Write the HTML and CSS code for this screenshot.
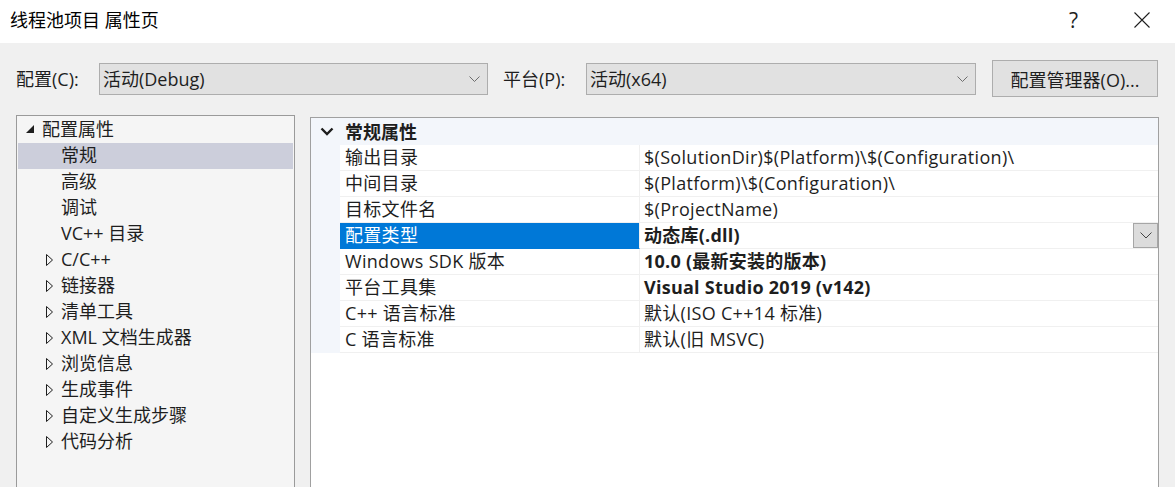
FILE: index.html
```html
<!DOCTYPE html>
<html lang="zh-CN">
<head>
<meta charset="utf-8">
<title>线程池项目 属性页</title>
<link rel="stylesheet" href="styles.css">
</head>
<body>
<div class="dialog">
  <div class="titlebar">
    <div class="title">线程池项目 属性页</div>
    <div class="title-btns">
      <span class="help">?</span>
      <svg class="close" width="16" height="16" viewBox="0 0 16 16"><path d="M0.5 0.5 L15.5 15.5 M15.5 0.5 L0.5 15.5" stroke="#1e1e1e" stroke-width="1.1" fill="none"/></svg>
    </div>
  </div>

  <div class="configbar">
    <span class="lbl">配置(C):</span>
    <div class="combo combo-cfg">
      <span>活动(Debug)</span>
      <svg class="chev" width="11" height="6" viewBox="0 0 11 6"><path d="M0.5 0.5 L5.5 5.5 L10.5 0.5" stroke="#6d6d6d" stroke-width="1" fill="none"/></svg>
    </div>
    <span class="lbl lbl-plat">平台(P):</span>
    <div class="combo combo-plat">
      <span>活动(x64)</span>
      <svg class="chev" width="11" height="6" viewBox="0 0 11 6"><path d="M0.5 0.5 L5.5 5.5 L10.5 0.5" stroke="#6d6d6d" stroke-width="1" fill="none"/></svg>
    </div>
    <button class="btn">配置管理器(O)...</button>
  </div>

  <div class="main">
    <div class="tree">
      <div class="trow lvl0">
        <span class="tw"><svg width="10" height="10" viewBox="0 0 10 10"><polygon points="9,1 9,9 1,9" fill="#1e1e1e"/></svg></span>
        <span>配置属性</span>
      </div>
      <div class="trow lvl1 sel"><span class="tw"></span><span>常规</span></div>
      <div class="trow lvl1"><span class="tw"></span><span>高级</span></div>
      <div class="trow lvl1"><span class="tw"></span><span>调试</span></div>
      <div class="trow lvl1"><span class="tw"></span><span>VC++ 目录</span></div>
      <div class="trow lvl1"><span class="tw"><svg width="8" height="12" viewBox="0 0 8 12"><polygon points="0.5,0.5 6.5,6 0.5,11.5" fill="none" stroke="#1e1e1e" stroke-width="1"/></svg></span><span>C/C++</span></div>
      <div class="trow lvl1"><span class="tw"><svg width="8" height="12" viewBox="0 0 8 12"><polygon points="0.5,0.5 6.5,6 0.5,11.5" fill="none" stroke="#1e1e1e" stroke-width="1"/></svg></span><span>链接器</span></div>
      <div class="trow lvl1"><span class="tw"><svg width="8" height="12" viewBox="0 0 8 12"><polygon points="0.5,0.5 6.5,6 0.5,11.5" fill="none" stroke="#1e1e1e" stroke-width="1"/></svg></span><span>清单工具</span></div>
      <div class="trow lvl1"><span class="tw"><svg width="8" height="12" viewBox="0 0 8 12"><polygon points="0.5,0.5 6.5,6 0.5,11.5" fill="none" stroke="#1e1e1e" stroke-width="1"/></svg></span><span>XML 文档生成器</span></div>
      <div class="trow lvl1"><span class="tw"><svg width="8" height="12" viewBox="0 0 8 12"><polygon points="0.5,0.5 6.5,6 0.5,11.5" fill="none" stroke="#1e1e1e" stroke-width="1"/></svg></span><span>浏览信息</span></div>
      <div class="trow lvl1"><span class="tw"><svg width="8" height="12" viewBox="0 0 8 12"><polygon points="0.5,0.5 6.5,6 0.5,11.5" fill="none" stroke="#1e1e1e" stroke-width="1"/></svg></span><span>生成事件</span></div>
      <div class="trow lvl1"><span class="tw"><svg width="8" height="12" viewBox="0 0 8 12"><polygon points="0.5,0.5 6.5,6 0.5,11.5" fill="none" stroke="#1e1e1e" stroke-width="1"/></svg></span><span>自定义生成步骤</span></div>
      <div class="trow lvl1"><span class="tw"><svg width="8" height="12" viewBox="0 0 8 12"><polygon points="0.5,0.5 6.5,6 0.5,11.5" fill="none" stroke="#1e1e1e" stroke-width="1"/></svg></span><span>代码分析</span></div>
    </div>

    <div class="grid">
      <div class="cat">
        <span class="cat-tw"><svg width="14" height="9" viewBox="0 0 14 9"><path d="M1.5 1.5 L7 7 L12.5 1.5" stroke="#1e1e1e" stroke-width="2.4" fill="none"/></svg></span>
        <span class="cat-name">常规属性</span>
      </div>
      <div class="prow"><div class="pname">输出目录</div><div class="pval">$(SolutionDir)$(Platform)\$(Configuration)\</div></div>
      <div class="prow"><div class="pname">中间目录</div><div class="pval">$(Platform)\$(Configuration)\</div></div>
      <div class="prow"><div class="pname">目标文件名</div><div class="pval">$(ProjectName)</div></div>
      <div class="prow psel"><div class="pname">配置类型</div><div class="pval bold"><span class="vtext">动态库(.dll)</span>
        <span class="ddbtn"><svg width="12" height="7" viewBox="0 0 12 7"><path d="M0.5 0.5 L6 6 L11.5 0.5" stroke="#444" stroke-width="1" fill="none"/></svg></span></div></div>
      <div class="prow"><div class="pname">Windows SDK 版本</div><div class="pval bold">10.0 (最新安装的版本)</div></div>
      <div class="prow"><div class="pname">平台工具集</div><div class="pval bold">Visual Studio 2019 (v142)</div></div>
      <div class="prow"><div class="pname">C++ 语言标准</div><div class="pval">默认(ISO C++14 标准)</div></div>
      <div class="prow"><div class="pname">C 语言标准</div><div class="pval">默认(旧 MSVC)</div></div>
      <div class="grid-rest"></div>
    </div>
  </div>
</div>
</body>
</html>
```

FILE: styles.css
```css
* { box-sizing: border-box; }
html, body { margin: 0; padding: 0; }
body {
  width: 1175px;
  height: 487px;
  overflow: hidden;
  background: #f0f0f0;
  font-family: "Open Sans", "Noto Sans CJK SC", sans-serif;
  font-size: 18px;
  color: #1e1e1e;
}
.dialog { display: flex; flex-direction: column; height: 487px; overflow: hidden; }

.titlebar {
  height: 43px;
  background: #ffffff;
  display: flex;
  align-items: center;
  justify-content: space-between;
  padding-left: 10px;
  flex: none;
}
.title { color: #000; line-height: 24px; margin-top: -3px; }
.title-btns { display: flex; align-items: center; padding-right: 25px; margin-top: -3px; }
.help { font-size: 21px; color: #1e1e1e; margin-right: 56px; line-height: 22px; font-weight: 400; }
.close { display: block; }

.configbar {
  height: 72px;
  display: flex;
  align-items: center;
  padding-left: 16px;
  flex: none;
}
.lbl { line-height: 24px; width: 83px; }
.lbl-plat { margin-left: 15px; }
.combo {
  height: 32px;
  background: #e1e1e1;
  border: 1px solid #adadad;
  display: flex;
  align-items: center;
  justify-content: space-between;
  padding-left: 3px;
  padding-right: 7px;
  line-height: 24px;
}
.combo-cfg { width: 389px; }
.combo-plat { width: 390px; }
.chev { display: block; }
.btn {
  margin-left: 16px;
  width: 166px;
  height: 37px;
  margin-top: -1px;
  background: #e1e1e1;
  border: 1px solid #adadad;
  font-family: inherit;
  font-size: 18px;
  color: #1e1e1e;
  padding: 0;
}

.main {
  flex: 1;
  display: flex;
  align-items: flex-start;
  padding-left: 16px;
  min-height: 0;
  overflow: hidden;
}
.tree {
  width: 279px;
  height: 373px;
  background: #f5f5f5;
  border: 1px solid #9a9a9a;
  border-bottom: none;
  padding: 1px;
}
.trow {
  height: 26px;
  display: flex;
  align-items: center;
  line-height: 24px;
  padding-bottom: 2px;
  white-space: nowrap;
}
.trow .tw { display: flex; align-items: center; flex: none; }
.trow svg { display: block; }
.lvl0 { padding-left: 7px; }
.lvl0 .tw { width: 17px; margin-top: -1px; }
.lvl1 { padding-left: 28px; }
.lvl1 .tw { width: 15px; margin-top: 1px; }
.trow.sel { background: #cccedb; }

.grid {
  margin-left: 15px;
  margin-top: 2px;
  width: 849px;
  height: 371px;
  border: 1px solid #a0a0a0;
  border-bottom: none;
  background: #ffffff;
  display: flex;
  flex-direction: column;
}
.cat {
  height: 27px;
  background: #f3f6fb;
  display: flex;
  align-items: center;
  flex: none;
}
.cat-tw { width: 34px; padding-left: 9px; display: flex; align-items: center; }
.cat-tw svg { display: block; }
.cat-name { font-weight: 700; line-height: 24px; }
.prow {
  height: 26px;
  display: flex;
  flex: none;
  background: #f3f6fb;
  padding-left: 29px;
}
.pname, .pval {
  height: 26px;
  display: flex;
  align-items: center;
  background: #ffffff;
  border-bottom: 1px solid #f0f0f0;
  white-space: nowrap;
  line-height: 24px;
  padding-bottom: 1px;
  letter-spacing: 0.3px;
}
.pname {
  width: 300px;
  padding-left: 5px;
  border-right: 1px solid #f0f0f0;
}
.pval { flex: 1; padding-left: 4px; }
.pval.bold { font-weight: 700; letter-spacing: 0.25px; }
.psel .pname { background: #0078d7; color: #ffffff; border-bottom-color: #0078d7; }
.psel .pval { justify-content: space-between; padding-right: 0; }
.ddbtn {
  width: 25px;
  height: 25px;
  background: #dcdcdc;
  border: 1px solid #a6a6a6;
  display: flex;
  align-items: center;
  justify-content: center;
  align-self: flex-start;
}
.ddbtn svg { display: block; }
.grid-rest { flex: 1; background: #ffffff; }
```
